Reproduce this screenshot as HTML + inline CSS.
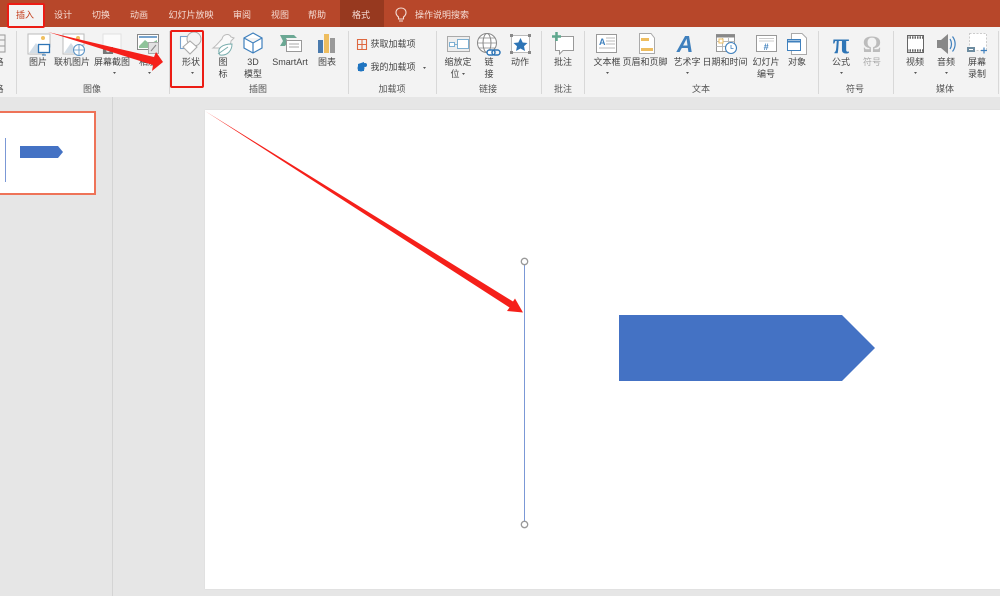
<!DOCTYPE html>
<html lang="zh-CN">
<head>
<meta charset="utf-8">
<title>PowerPoint</title>
<style>
html,body{margin:0;padding:0;background:#e6e6e6}
#p{position:relative;width:1000px;height:596px;overflow:hidden;background:#e6e6e6;font-family:"Liberation Sans","Noto Sans CJK SC",sans-serif;font-size:9px;line-height:11px;color:#444;filter:blur(.35px)}
#p div{position:absolute}
.t{transform:translateX(-50%);white-space:nowrap}
.h{color:#f6ddd5;font-size:9px}
.g{color:#555}
.s{width:1px;top:31px;height:63px;background:#d8d8d8}
svg{position:absolute;left:0;top:0}
</style>
</head>
<body>
<div id="p">
<div style="left:0;top:0;width:1000px;height:27px;background:#b7472a"></div>
<div style="left:340px;top:0;width:44px;height:27px;background:#97391f"></div>
<div style="left:0;top:27px;width:1000px;height:70px;background:#f3f3f3"></div>
<div style="left:0;top:97px;width:1000px;height:499px;background:#e6e6e6"></div>
<div style="left:112px;top:97px;width:1px;height:499px;background:#d4d4d4"></div>
<div style="left:205px;top:110px;width:795px;height:479px;background:#fff;box-shadow:0 0 1px #ccc"></div>
<div style="left:-6px;top:111px;width:98px;height:80px;background:#fff;border:2px solid #ee7358"></div>
<div style="left:9px;top:4px;width:34px;height:23px;background:#f3f3f3"></div>

<div class="s" style="left:16px"></div>
<div class="s" style="left:169px"></div>
<div class="s" style="left:348px"></div>
<div class="s" style="left:436px"></div>
<div class="s" style="left:541px"></div>
<div class="s" style="left:584px"></div>
<div class="s" style="left:818px"></div>
<div class="s" style="left:893px"></div>
<div class="s" style="left:998px"></div>

<div class="t" style="left:25px;top:10px;color:#c43e1c">插入</div>
<div class="t h" style="left:63px;top:10px">设计</div>
<div class="t h" style="left:101px;top:10px">切换</div>
<div class="t h" style="left:139px;top:10px">动画</div>
<div class="t h" style="left:191px;top:10px">幻灯片放映</div>
<div class="t h" style="left:242px;top:10px">审阅</div>
<div class="t h" style="left:280px;top:10px">视图</div>
<div class="t h" style="left:317px;top:10px">帮助</div>
<div class="t h" style="left:361px;top:10px">格式</div>
<div class="t h" style="left:442px;top:10px">操作说明搜索</div>

<div class="t" style="left:-1px;top:57px">格</div>
<div class="t" style="left:-1px;top:84px">格</div>
<div class="t" style="left:38px;top:57px">图片</div>
<div class="t" style="left:72px;top:57px">联机图片</div>
<div class="t" style="left:112px;top:57px">屏幕截图</div>
<div class="t" style="left:148px;top:57px">相册</div>
<div class="t" style="left:191px;top:57px">形状</div>
<div class="t" style="left:223px;top:57px">图</div>
<div class="t" style="left:223px;top:69px">标</div>
<div class="t" style="left:253px;top:57px">3D</div>
<div class="t" style="left:253px;top:69px">模型</div>
<div class="t" style="left:290px;top:57px">SmartArt</div>
<div class="t" style="left:327px;top:57px">图表</div>
<div class="t" style="left:393px;top:39px">获取加载项</div>
<div class="t" style="left:393px;top:62px">我的加载项</div>
<div class="t" style="left:458px;top:57px">缩放定</div>
<div class="t" style="left:455px;top:69px">位</div>
<div class="t" style="left:489px;top:57px">链</div>
<div class="t" style="left:489px;top:69px">接</div>
<div class="t" style="left:520px;top:57px">动作</div>
<div class="t" style="left:563px;top:57px">批注</div>
<div class="t" style="left:607px;top:57px">文本框</div>
<div class="t" style="left:645px;top:57px">页眉和页脚</div>
<div class="t" style="left:687px;top:57px">艺术字</div>
<div class="t" style="left:725px;top:57px">日期和时间</div>
<div class="t" style="left:766px;top:57px">幻灯片</div>
<div class="t" style="left:766px;top:69px">编号</div>
<div class="t" style="left:797px;top:57px">对象</div>
<div class="t" style="left:841px;top:57px">公式</div>
<div class="t" style="left:872px;top:57px;color:#aaa">符号</div>
<div class="t" style="left:915px;top:57px">视频</div>
<div class="t" style="left:946px;top:57px">音频</div>
<div class="t" style="left:977px;top:57px">屏幕</div>
<div class="t" style="left:977px;top:69px">录制</div>

<div class="t g" style="left:92px;top:84px">图像</div>
<div class="t g" style="left:258px;top:84px">插图</div>
<div class="t g" style="left:392px;top:84px">加载项</div>
<div class="t g" style="left:488px;top:84px">链接</div>
<div class="t g" style="left:563px;top:84px">批注</div>
<div class="t g" style="left:701px;top:84px">文本</div>
<div class="t g" style="left:855px;top:84px">符号</div>
<div class="t g" style="left:945px;top:84px">媒体</div>

<div class="t" style="left:841px;top:32px;font-family:'Liberation Serif',serif;font-size:30px;line-height:24px;font-weight:bold;color:#2e75b6">π</div>
<div class="t" style="left:872px;top:33px;font-family:'Liberation Serif',serif;font-size:23px;line-height:24px;font-weight:bold;color:#bcbcbc">Ω</div>
<div class="t" style="left:685px;top:31px;font-family:'Liberation Sans',sans-serif;font-style:italic;font-weight:bold;font-size:23px;line-height:26px;color:#3f80bd">A</div>

<svg width="1000" height="596" viewBox="0 0 1000 596" fill="none">
<!-- thumbnail -->
<path d="M5.500 138V182" stroke="#7b98d6"/>
<path d="M20 146H58L63 152L58 158H20Z" fill="#4472c4"/>

<!-- slide shapes -->
<path d="M619 315H842L875 348L842 381H619Z" fill="#4472c4"/>
<path d="M524.500 265V521" stroke="#7b98d6"/>
<circle cx="524.500" cy="261.500" r="3.200" fill="#fff" stroke="#999" stroke-width="1.300"/>
<circle cx="524.500" cy="524.500" r="3.200" fill="#fff" stroke="#999" stroke-width="1.300"/>

<!-- ribbon dropdown carets -->
<g fill="#555">
<path d="M113 72h3l-1.500 2z"/><path d="M148 72h3l-1.500 2z"/><path d="M191 72h3l-1.500 2z"/>
<path d="M423 67h3l-1.500 2z"/><path d="M462 73h3l-1.500 2z"/><path d="M606 72h3l-1.500 2z"/>
<path d="M686 72h3l-1.500 2z"/><path d="M840 72h3l-1.500 2z"/><path d="M914 72h3l-1.500 2z"/><path d="M945 72h3l-1.500 2z"/>
</g>

<!-- left partial table icon -->
<path d="M-1 35H5V52H-1M-1 40H5M-1 46H5" stroke="#999"/>

<!-- picture -->
<path d="M28 34H50V47H44V54H28Z" fill="#fff" stroke="#bbb"/>
<path d="M29 53L36 43L43 53Z" fill="#d3dde6"/>
<circle cx="43" cy="38" r="2" fill="#f0c060"/>
<rect x="38.500" y="44.500" width="11" height="8" fill="#fff" stroke="#2e75b6" stroke-width="1.300"/>
<path d="M42 55H46" stroke="#2e75b6"/>
<!-- online picture -->
<path d="M63 34H84V45H78V54H63Z" fill="#fff" stroke="#bbb"/>
<path d="M64 53L71 43L78 53Z" fill="#d3dde6"/>
<circle cx="78" cy="38" r="2" fill="#f0c060"/>
<circle cx="79" cy="50" r="5.500" fill="#fff" stroke="#5a93c5"/>
<path d="M73.500 50H84.500M79 44.500V55.500" stroke="#5a93c5" stroke-width=".8"/>
<!-- screenshot -->
<path d="M103 34H121V53H103Z" fill="#fbfbfb" stroke="#e2e2e2"/>
<rect x="103" y="47" width="10" height="7" fill="#777"/>
<circle cx="108" cy="50.500" r="1.800" fill="#ddd"/>
<!-- album -->
<rect x="137.500" y="34.500" width="21" height="15" fill="#fff" stroke="#888"/>
<path d="M139 37H157" stroke="#4a86bd" stroke-width="1.500"/>
<path d="M139 46L145 40L150 44L157 40V48H139Z" fill="#8fc39a"/>
<rect x="148.500" y="42.500" width="10" height="11" fill="#e2e2e2" stroke="#aaa"/>
<path d="M151 51L156 45" stroke="#888"/>
<!-- shapes -->
<rect x="180.500" y="36.500" width="14" height="12" fill="#fff" stroke="#7aa3cd" stroke-width="1.100"/>
<circle cx="194" cy="39" r="7" fill="#f3f3f3" stroke="#aaa"/>
<path d="M190 41L197 47L190 54L183 47Z" fill="#fff" stroke="#aaa" stroke-width="1.100"/>
<!-- icons -->
<path d="M222 39C223 34 229 33 231 37L234 38L231 41C231 44 229 47 226 48L213 48C216 46 219 42 222 39Z" fill="#fafafa" stroke="#bbb"/>
<path d="M220 55C216 48 223 44 232 44C232 50 228 56 220 55Z" fill="#fff" stroke="#7aaeae"/>
<path d="M218 54L228 47" stroke="#7aaeae"/>
<!-- 3D -->
<path d="M253 33L262 38V48L253 53L244 48V38ZM244 38L253 43L262 38M253 43V53" fill="#fff" stroke="#3f80bd" stroke-width="1.200"/>
<!-- smartart -->
<path d="M280 35H294L297 38H286L288 42L285 46H280L283 41Z" fill="#6ba894"/>
<rect x="286.500" y="40.500" width="15" height="11" fill="#fff" stroke="#999"/>
<path d="M289 44H299M289 47H299" stroke="#aaa"/>
<!-- chart -->
<rect x="318" y="40" width="5" height="13" fill="#4a7aad"/>
<rect x="324" y="34" width="5" height="19" fill="#eebd5f"/>
<rect x="330" y="38" width="5" height="15" fill="#999"/>
<!-- get add-ins -->
<path d="M357.500 39.500H366.500V49.500H357.500ZM357.500 44.500H366.500M362 39.500V49.500" stroke="#de6840" stroke-width="1.100"/>
<!-- my add-ins -->
<path d="M358 64L364 62V71H358Z" fill="#1f74c0"/>
<circle cx="361" cy="68" r="3.500" fill="#1f74c0"/>
<circle cx="365" cy="65" r="2" fill="#1f74c0"/>
<!-- zoom -->
<rect x="447.500" y="36.500" width="22" height="15" fill="#eee" stroke="#aaa"/>
<rect x="457.500" y="39.500" width="11" height="9" fill="#fff" stroke="#7eb0d2"/>
<rect x="449.500" y="42.500" width="5" height="4" fill="#fff" stroke="#7eb0d2"/>
<path d="M454 44.500H458" stroke="#7eb0d2"/>
<!-- link -->
<circle cx="487" cy="43" r="9.500" fill="#fff" stroke="#888"/>
<ellipse cx="487" cy="43" rx="4" ry="9.500" stroke="#888"/>
<path d="M478 43H496M479 38H495M479 48H495" stroke="#888" stroke-width=".8"/>
<rect x="487" y="50" width="8" height="5" rx="2.500" fill="#fff" stroke="#2e75b6" stroke-width="1.500"/>
<rect x="492" y="50" width="8" height="5" rx="2.500" stroke="#2e75b6" stroke-width="1.500"/>
<!-- action -->
<rect x="511.500" y="35.500" width="18" height="17" fill="#fff" stroke="#bbb"/>
<g fill="#888"><rect x="510" y="34" width="3" height="3"/><rect x="528" y="34" width="3" height="3"/><rect x="510" y="51" width="3" height="3"/><rect x="528" y="51" width="3" height="3"/></g>
<path d="M520.500 38L522.700 42.500L527.500 43L524 46.200L525 51L520.500 48.500L516 51L517 46.200L513.500 43L518.300 42.500Z" fill="#2e75b6"/>
<!-- comment -->
<path d="M555.500 36.500H573.500V50.500H563L559.500 54V50.500H555.500Z" fill="#fff" stroke="#999"/>
<path d="M556.500 32V41M552 36.500H561" stroke="#5fa88e" stroke-width="2.500"/>
<!-- textbox -->
<rect x="596.500" y="34.500" width="20" height="18" fill="#fff" stroke="#999"/>
<text x="599" y="45" font-family="Liberation Sans" font-size="9" font-weight="bold" fill="#3f80bd">A</text>
<path d="M606 38H615M606 41H615M606 44H615M599 48H615" stroke="#bbb"/>
<!-- header footer -->
<path d="M639.500 33.500H651L654.500 38V53.500H639.500Z" fill="#fff" stroke="#aaa"/>
<rect x="641" y="38" width="8" height="3" fill="#eebd5f"/>
<rect x="641" y="48" width="12" height="3" fill="#eebd5f"/>
<!-- date time -->
<rect x="716.500" y="34.500" width="18" height="17" fill="#fff" stroke="#999"/>
<path d="M716 36H735" stroke="#888" stroke-width="3"/>
<path d="M722.500 38V51M728.500 38V51M716.500 41.500H734.500M716.500 46.500H734.500" stroke="#bbb"/>
<rect x="719" y="39" width="4" height="4" fill="#fff" stroke="#eebd5f"/>
<circle cx="731" cy="48" r="5.500" fill="#fff" stroke="#3f80bd" stroke-width="1.100"/>
<path d="M731 45V48.500H733.500" stroke="#3f80bd" stroke-width=".8"/>
<!-- slide number -->
<rect x="756.500" y="35.500" width="20" height="16" fill="#fff" stroke="#999"/>
<path d="M759 38.500H774M759 41H774" stroke="#ccc"/>
<text x="763.500" y="50" font-family="Liberation Sans" font-size="9" font-style="italic" font-weight="bold" fill="#3f80bd">#</text>
<!-- object -->
<path d="M791.500 33.500H802L806.500 38V54.500H791.500Z" fill="#fff" stroke="#aaa"/>
<rect x="787.500" y="39.500" width="13" height="11" fill="#fff" stroke="#3f80bd"/>
<path d="M787 41.500H801" stroke="#3f80bd" stroke-width="2"/>
<!-- video -->
<rect x="907.500" y="35.500" width="16" height="17" fill="#fff" stroke="#666"/>
<path d="M907 37.500H924M907 50.500H924" stroke="#666" stroke-width="2.500" stroke-dasharray="1.500 1"/>
<!-- audio -->
<path d="M937 40H941L948 34V54L941 48H937Z" fill="#888"/>
<path d="M950 39C952 42 952 46 950 49M952.500 36.500C956 41 956 47 952.500 51.500" stroke="#3f80bd" stroke-width="1.200"/>
<!-- screen record -->
<rect x="969.500" y="33.500" width="17" height="17" fill="#fff" stroke="#ccc" stroke-dasharray="2 1.500"/>
<rect x="967" y="47" width="8" height="5" fill="#6d8ca0"/>
<path d="M969 49.500H973" stroke="#fff"/>
<path d="M981 50.500H987M984 47.500V53.500" stroke="#3f80bd" stroke-width="1.200"/>
<!-- lightbulb -->
<path d="M398.500 19V17C396.500 15.500 396 14 396 12.500C396 9.800 398 8 401 8C404 8 406 9.800 406 12.500C406 14 405.500 15.500 403.500 17V19Z" stroke="#f4ddd6" stroke-width="1.100"/>
<path d="M399 21H403" stroke="#f4ddd6"/>

<!-- red annotations -->
<rect x="8" y="4" width="36" height="23" rx="1" stroke="#ec1c14" stroke-width="2"/>
<rect x="171" y="31" width="32" height="56" rx="1" stroke="#ec1c14" stroke-width="2"/>
<path d="M48 32L154 57L156 52L163 62L152 71L153 65Z" fill="#f5201a"/>
<path d="M205 111L513 301.500L515 298.500L523 312.500L507 311L509.500 307.500Z" fill="#f5201a"/>
</svg>
</div>
</body>
</html>
